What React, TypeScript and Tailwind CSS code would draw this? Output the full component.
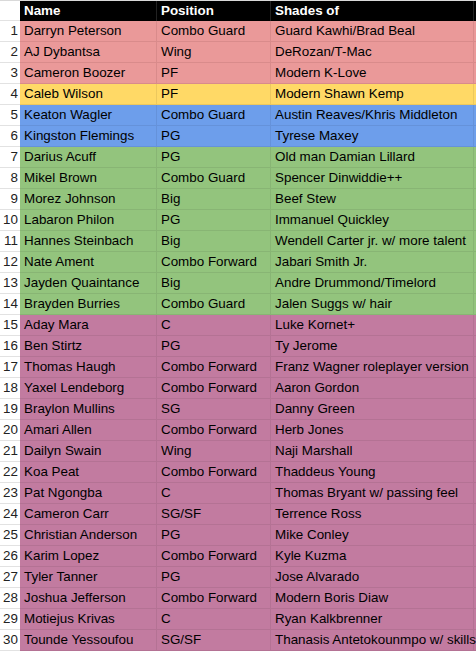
import React from "react";

type Row = [string, string, string];

const groups: { color: string; line: string; rows: Row[] }[] = [
  {
    color: "bg-[#ea9999]",
    line: "border-[#d98b8b]",
    rows: [
      ["Darryn Peterson", "Combo Guard", "Guard Kawhi/Brad Beal"],
      ["AJ Dybantsa", "Wing", "DeRozan/T-Mac"],
      ["Cameron Boozer", "PF", "Modern K-Love"],
    ],
  },
  {
    color: "bg-[#ffd966]",
    line: "border-[#ecc85e]",
    rows: [["Caleb Wilson", "PF", "Modern Shawn Kemp"]],
  },
  {
    color: "bg-[#6d9eeb]",
    line: "border-[#6592da]",
    rows: [
      ["Keaton Wagler", "Combo Guard", "Austin Reaves/Khris Middleton"],
      ["Kingston Flemings", "PG", "Tyrese Maxey"],
    ],
  },
  {
    color: "bg-[#93c47d]",
    line: "border-[#88b574]",
    rows: [
      ["Darius Acuff", "PG", "Old man Damian Lillard"],
      ["Mikel Brown", "Combo Guard", "Spencer Dinwiddie++"],
      ["Morez Johnson", "Big", "Beef Stew"],
      ["Labaron Philon", "PG", "Immanuel Quickley"],
      ["Hannes Steinbach", "Big", "Wendell Carter jr. w/ more talent"],
      ["Nate Ament", "Combo Forward", "Jabari Smith Jr."],
      ["Jayden Quaintance", "Big", "Andre Drummond/Timelord"],
      ["Brayden Burries", "Combo Guard", "Jalen Suggs w/ hair"],
    ],
  },
  {
    color: "bg-[#c27ba0]",
    line: "border-[#b47294]",
    rows: [
      ["Aday Mara", "C", "Luke Kornet+"],
      ["Ben Stirtz", "PG", "Ty Jerome"],
      ["Thomas Haugh", "Combo Forward", "Franz Wagner roleplayer version"],
      ["Yaxel Lendeborg", "Combo Forward", "Aaron Gordon"],
      ["Braylon Mullins", "SG", "Danny Green"],
      ["Amari Allen", "Combo Forward", "Herb Jones"],
      ["Dailyn Swain", "Wing", "Naji Marshall"],
      ["Koa Peat", "Combo Forward", "Thaddeus Young"],
      ["Pat Ngongba", "C", "Thomas Bryant w/ passing feel"],
      ["Cameron Carr", "SG/SF", "Terrence Ross"],
      ["Christian Anderson", "PG", "Mike Conley"],
      ["Karim Lopez", "Combo Forward", "Kyle Kuzma"],
      ["Tyler Tanner", "PG", "Jose Alvarado"],
      ["Joshua Jefferson", "Combo Forward", "Modern Boris Diaw"],
      ["Motiejus Krivas", "C", "Ryan Kalkbrenner"],
      ["Tounde Yessoufou", "SG/SF", "Thanasis Antetokounmpo w/ skills"],
    ],
  },
];

const gridCols = "grid grid-cols-[20px_137px_114px_203px_1fr]";

export default function App() {
  let n = 0;
  return (
    <div
      className="w-[476px] h-[652px] overflow-hidden bg-white text-[13.4px] leading-none text-black"
      style={{ fontFamily: '"Liberation Sans", Arial, sans-serif' }}
    >
      <div className={`${gridCols} h-[21px] border-t border-[#d9d9d9]`}>
        <div className="bg-white border-b border-[#e2e2e2]" />
        <div className="bg-black text-white font-bold flex items-center pl-[4px] border-r border-[#222]">Name</div>
        <div className="bg-black text-white font-bold flex items-center pl-[4px] border-r border-[#222]">Position</div>
        <div className="bg-black text-white font-bold flex items-center pl-[4px] border-r border-[#222]">Shades of</div>
        <div className="bg-black" />
      </div>
      {groups.map((g) =>
        g.rows.map((r) => {
          n += 1;
          return (
            <div key={n} className={`${gridCols} h-[21px]`}>
              <div className="bg-white border-b border-[#e2e2e2] flex items-center justify-end pr-[2px] text-[#222]">
                {n}
              </div>
              {r.map((c, i) => (
                <div
                  key={i}
                  className={`${g.color} ${g.line} border-r border-b flex items-center pl-[4px] whitespace-nowrap overflow-visible relative ${i === 2 ? "z-10" : ""}`}
                >
                  {c}
                </div>
              ))}
              <div className={`${g.color} ${g.line} border-b`} />
            </div>
          );
        })
      )}
    </div>
  );
}
